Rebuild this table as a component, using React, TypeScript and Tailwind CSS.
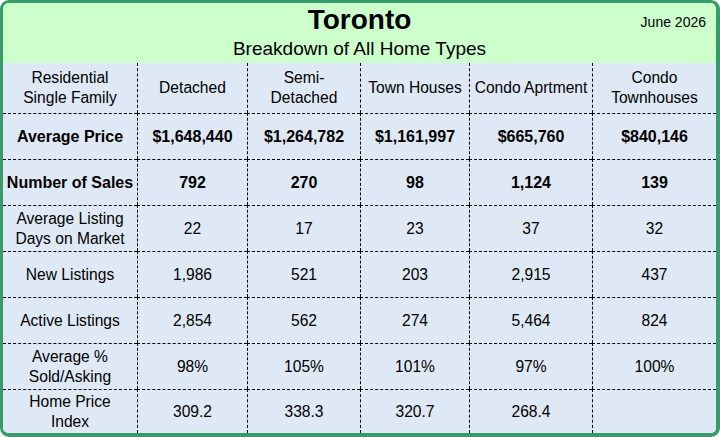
import React from "react";

const columns = ["Residential\nSingle Family", "Detached", "Semi-\nDetached", "Town Houses", "Condo Aprtment", "Condo\nTownhouses"];

const rows: { label: string; bold?: boolean; values: string[] }[] = [
    { label: "Average Price", bold: true, values: ["$1,648,440", "$1,264,782", "$1,161,997", "$665,760", "$840,146"] },
    { label: "Number of Sales", bold: true, values: ["792", "270", "98", "1,124", "139"] },
    { label: "Average Listing\nDays on Market", values: ["22", "17", "23", "37", "32"] },
    { label: "New Listings", values: ["1,986", "521", "203", "2,915", "437"] },
    { label: "Active Listings", values: ["2,854", "562", "274", "5,464", "824"] },
    { label: "Average %\nSold/Asking", values: ["98%", "105%", "101%", "97%", "100%"] },
    { label: "Home Price\nIndex", values: ["309.2", "338.3", "320.7", "268.4", ""] },
];

function Cell({ text, row, col, bold }: { text: string; row: number; col: number; bold?: boolean }) {
    return (
        <div
            className={`flex items-center justify-center text-center whitespace-pre-line leading-[20px] border-dashed border-black ${col > 0 ? "border-l" : ""} ${row > 0 ? "border-t" : ""} ${bold ? "font-bold text-[16px]" : "text-[15.6px]"}`}
        >
            {text}
        </div>
    );
}

export default function App() {
    return (
        <div
            className="w-[720px] h-[437px] flex flex-col overflow-hidden rounded-[9px] border-l-[3px] border-t-[3px] border-r-4 border-b-4 border-[#389b6b] text-black"
            style={{ fontFamily: '"Liberation Sans", Arial, sans-serif' }}
        >
            <div className="relative h-[60px] shrink-0 bg-[#ccffcc] flex flex-col items-center">
                <div className="text-[28px] font-bold leading-[32px] mt-[1px]">Toronto</div>
                <div className="text-[19px] leading-[22px] mt-[2px]">Breakdown of All Home Types</div>
                <div className="absolute right-[10px] top-[10px] text-[14px] leading-[18px]">June 2026</div>
            </div>
            <div className="flex-1 grid grid-cols-[134px_110px_113px_109px_123px_1fr] grid-rows-[50px_46px_46px_46px_46px_46px_46px_1fr] bg-[#dfe9f5]">
                {columns.map((c, i) => (
                    <Cell key={c} text={c} row={0} col={i} />
                ))}
                {rows.map((r, ri) => (
                    <React.Fragment key={r.label}>
                        <Cell text={r.label} row={ri + 1} col={0} bold={r.bold} />
                        {r.values.map((v, vi) => (
                            <Cell key={vi} text={v} row={ri + 1} col={vi + 1} bold={r.bold} />
                        ))}
                    </React.Fragment>
                ))}
            </div>
        </div>
    );
}
